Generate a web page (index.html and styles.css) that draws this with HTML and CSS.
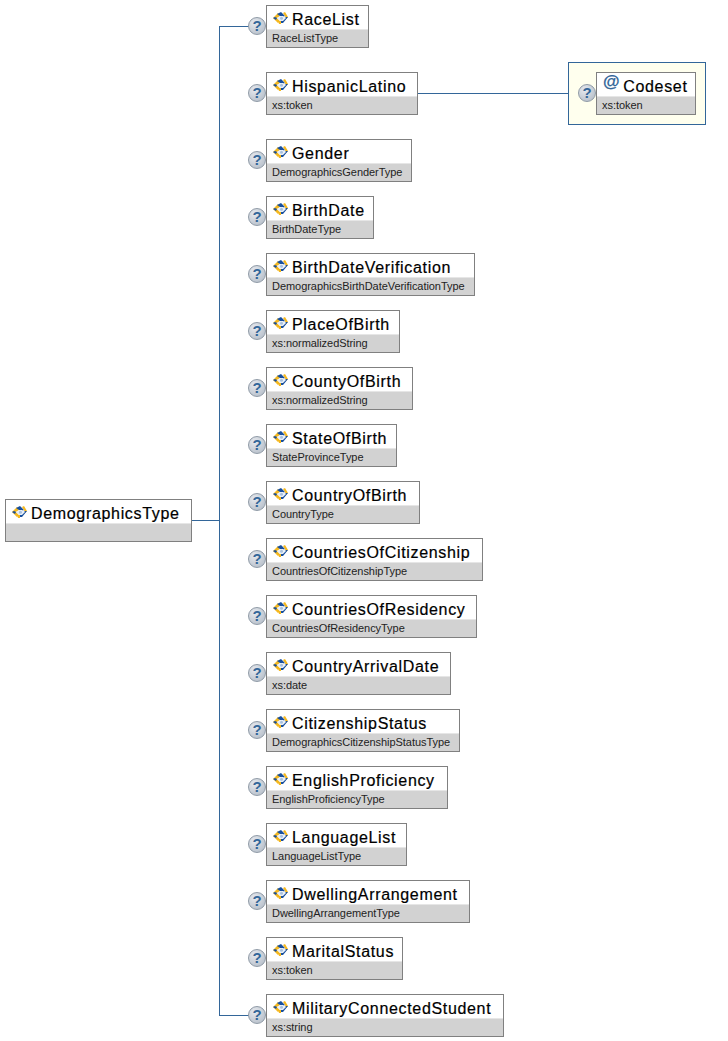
FILE: index.html
```html
<!DOCTYPE html>
<html lang="en">
<head>
<meta charset="utf-8">
<title>DemographicsType</title>
<link rel="stylesheet" href="styles.css">
</head>
<body>
<svg class="defs" width="0" height="0" aria-hidden="true">
  <symbol id="el" viewBox="0 0 15 12">
    <path d="M0 6 5 1l2 3-3 2 3 3-2 2z" fill="#f5b81e"/>
    <path d="M4 2 8 0l4 4-2 1-3-1zM0 6l2-1 2 1-1 2z" fill="#174f9e"/>
    <path d="M10 1l2-1 3 5-2 2-1-3z" fill="#f5b81e"/>
    <path d="M15 5 10 11H8V8h2l3-3z" fill="#174f9e"/>
    <path d="M5 9h3v3H6z" fill="#f5b81e"/>
    <path d="M7 4h3l3 2-3 3H7L4 6z" fill="#e9f0f8"/>
    <circle cx="8.5" cy="6.2" r="1.5" fill="#a9c1de"/>
  </symbol>
</svg>
<main class="diagram">
  <div class="root-wrap">
    <div class="node root" style="width:187px">
      <div class="title"><svg class="icon"><use href="#el"/></svg><span>DemographicsType</span></div>
      <div class="type">&nbsp;</div>
    </div>
    <div class="root-wire"></div>
  </div>
  <div class="tree">
    <div class="row first"><span class="help">?</span><div class="node" style="width:103px"><div class="title"><svg class="icon"><use href="#el"/></svg><span>RaceList</span></div><div class="type">RaceListType</div></div></div>
    <div class="row">
      <span class="help">?</span><div class="node" style="width:152px"><div class="title"><svg class="icon"><use href="#el"/></svg><span>HispanicLatino</span></div><div class="type">xs:token</div></div>
      <div class="attr-wire"></div>
      <div class="attrs"><span class="help">?</span><div class="node attr" style="width:100px"><div class="title"><span class="at">@</span><span>Codeset</span></div><div class="type">xs:token</div></div></div>
    </div>
    <div class="row"><span class="help">?</span><div class="node" style="width:146px"><div class="title"><svg class="icon"><use href="#el"/></svg><span>Gender</span></div><div class="type">DemographicsGenderType</div></div></div>
    <div class="row"><span class="help">?</span><div class="node" style="width:108px"><div class="title"><svg class="icon"><use href="#el"/></svg><span>BirthDate</span></div><div class="type">BirthDateType</div></div></div>
    <div class="row"><span class="help">?</span><div class="node" style="width:209px"><div class="title"><svg class="icon"><use href="#el"/></svg><span>BirthDateVerification</span></div><div class="type">DemographicsBirthDateVerificationType</div></div></div>
    <div class="row"><span class="help">?</span><div class="node" style="width:134px"><div class="title"><svg class="icon"><use href="#el"/></svg><span>PlaceOfBirth</span></div><div class="type">xs:normalizedString</div></div></div>
    <div class="row"><span class="help">?</span><div class="node" style="width:147px"><div class="title"><svg class="icon"><use href="#el"/></svg><span>CountyOfBirth</span></div><div class="type">xs:normalizedString</div></div></div>
    <div class="row"><span class="help">?</span><div class="node" style="width:131px"><div class="title"><svg class="icon"><use href="#el"/></svg><span>StateOfBirth</span></div><div class="type">StateProvinceType</div></div></div>
    <div class="row"><span class="help">?</span><div class="node" style="width:154px"><div class="title"><svg class="icon"><use href="#el"/></svg><span>CountryOfBirth</span></div><div class="type">CountryType</div></div></div>
    <div class="row"><span class="help">?</span><div class="node" style="width:217px"><div class="title"><svg class="icon"><use href="#el"/></svg><span>CountriesOfCitizenship</span></div><div class="type">CountriesOfCitizenshipType</div></div></div>
    <div class="row"><span class="help">?</span><div class="node" style="width:211px"><div class="title"><svg class="icon"><use href="#el"/></svg><span>CountriesOfResidency</span></div><div class="type">CountriesOfResidencyType</div></div></div>
    <div class="row"><span class="help">?</span><div class="node" style="width:185px"><div class="title"><svg class="icon"><use href="#el"/></svg><span>CountryArrivalDate</span></div><div class="type">xs:date</div></div></div>
    <div class="row"><span class="help">?</span><div class="node" style="width:194px"><div class="title"><svg class="icon"><use href="#el"/></svg><span>CitizenshipStatus</span></div><div class="type">DemographicsCitizenshipStatusType</div></div></div>
    <div class="row"><span class="help">?</span><div class="node" style="width:182px"><div class="title"><svg class="icon"><use href="#el"/></svg><span>EnglishProficiency</span></div><div class="type">EnglishProficiencyType</div></div></div>
    <div class="row"><span class="help">?</span><div class="node" style="width:141px"><div class="title"><svg class="icon"><use href="#el"/></svg><span>LanguageList</span></div><div class="type">LanguageListType</div></div></div>
    <div class="row"><span class="help">?</span><div class="node" style="width:204px"><div class="title"><svg class="icon"><use href="#el"/></svg><span>DwellingArrangement</span></div><div class="type">DwellingArrangementType</div></div></div>
    <div class="row"><span class="help">?</span><div class="node" style="width:137px"><div class="title"><svg class="icon"><use href="#el"/></svg><span>MaritalStatus</span></div><div class="type">xs:token</div></div></div>
    <div class="row last"><span class="help">?</span><div class="node" style="width:238px"><div class="title"><svg class="icon"><use href="#el"/></svg><span>MilitaryConnectedStudent</span></div><div class="type">xs:string</div></div></div>
  </div>
</main>
</body>
</html>
```

FILE: styles.css
```css
html, body {
  margin: 0;
  padding: 0;
  background: #fff;
}
.defs {
  position: absolute;
}
.diagram {
  display: flex;
  padding: 5px 0 4px 5px;
  font-family: "Liberation Sans", Arial, sans-serif;
  color: #000;
}
.root-wrap {
  display: flex;
  align-items: center;
  align-self: center;
  margin-top: -1px;
}
.root-wire {
  width: 27px;
  height: 1px;
  background: #336699;
}
.tree {
  position: relative;
  display: flex;
  flex-direction: column;
  align-items: flex-start;
  gap: 14px;
}
.tree::before {
  content: "";
  position: absolute;
  left: 0;
  top: 21px;
  bottom: 21px;
  width: 1px;
  background: #336699;
}
.row {
  position: relative;
  display: flex;
  align-items: center;
  padding-left: 29px;
}
.first::before,
.last::before {
  content: "";
  position: absolute;
  left: 0;
  top: 21px;
  width: 30px;
  height: 1px;
  background: #336699;
}
.help {
  position: relative;
  flex: none;
  box-sizing: border-box;
  width: 18px;
  height: 18px;
  margin-bottom: 2px;
  border: 1px solid #8f9aa6;
  border-radius: 50%;
  background: radial-gradient(circle at 35% 30%, #e6e9ee, #bcc4ce 75%);
  color: #336699;
  font-size: 15px;
  font-weight: bold;
  line-height: 16px;
  text-align: center;
}
.node {
  position: relative;
  display: flex;
  flex-direction: column;
  flex: none;
  box-sizing: border-box;
  height: 43px;
  border: 1px solid #808080;
  background: #d2d2d2;
}
.title {
  display: flex;
  align-items: center;
  height: 18px;
  padding: 5px 0 0 6px;
  background: #fff;
  border-bottom: 1px solid #e6e6e6;
  font-size: 16px;
  line-height: 18px;
  letter-spacing: 0.67px;
  white-space: nowrap;
  -webkit-text-stroke: 0.2px #000;
}
.icon {
  flex: none;
  width: 15px;
  height: 12px;
  margin: -5px 4px 0 0;
}
.type {
  padding: 0 0 0 5px;
  font-size: 11px;
  line-height: 16px;
  letter-spacing: -0.05px;
  color: #222;
  white-space: nowrap;
}
.attr-wire {
  flex: none;
  width: 150px;
  height: 1px;
  background: #336699;
}
.attrs {
  display: flex;
  align-items: center;
  box-sizing: border-box;
  height: 63px;
  padding: 0 9px 0 9px;
  border: 1px solid #336699;
  background: #ffffee;
}
.at {
  margin: -10px 3px 0 0;
  color: #336699;
  font-size: 17px;
  font-weight: bold;
  -webkit-text-stroke: 0.2px #336699;
}
```
